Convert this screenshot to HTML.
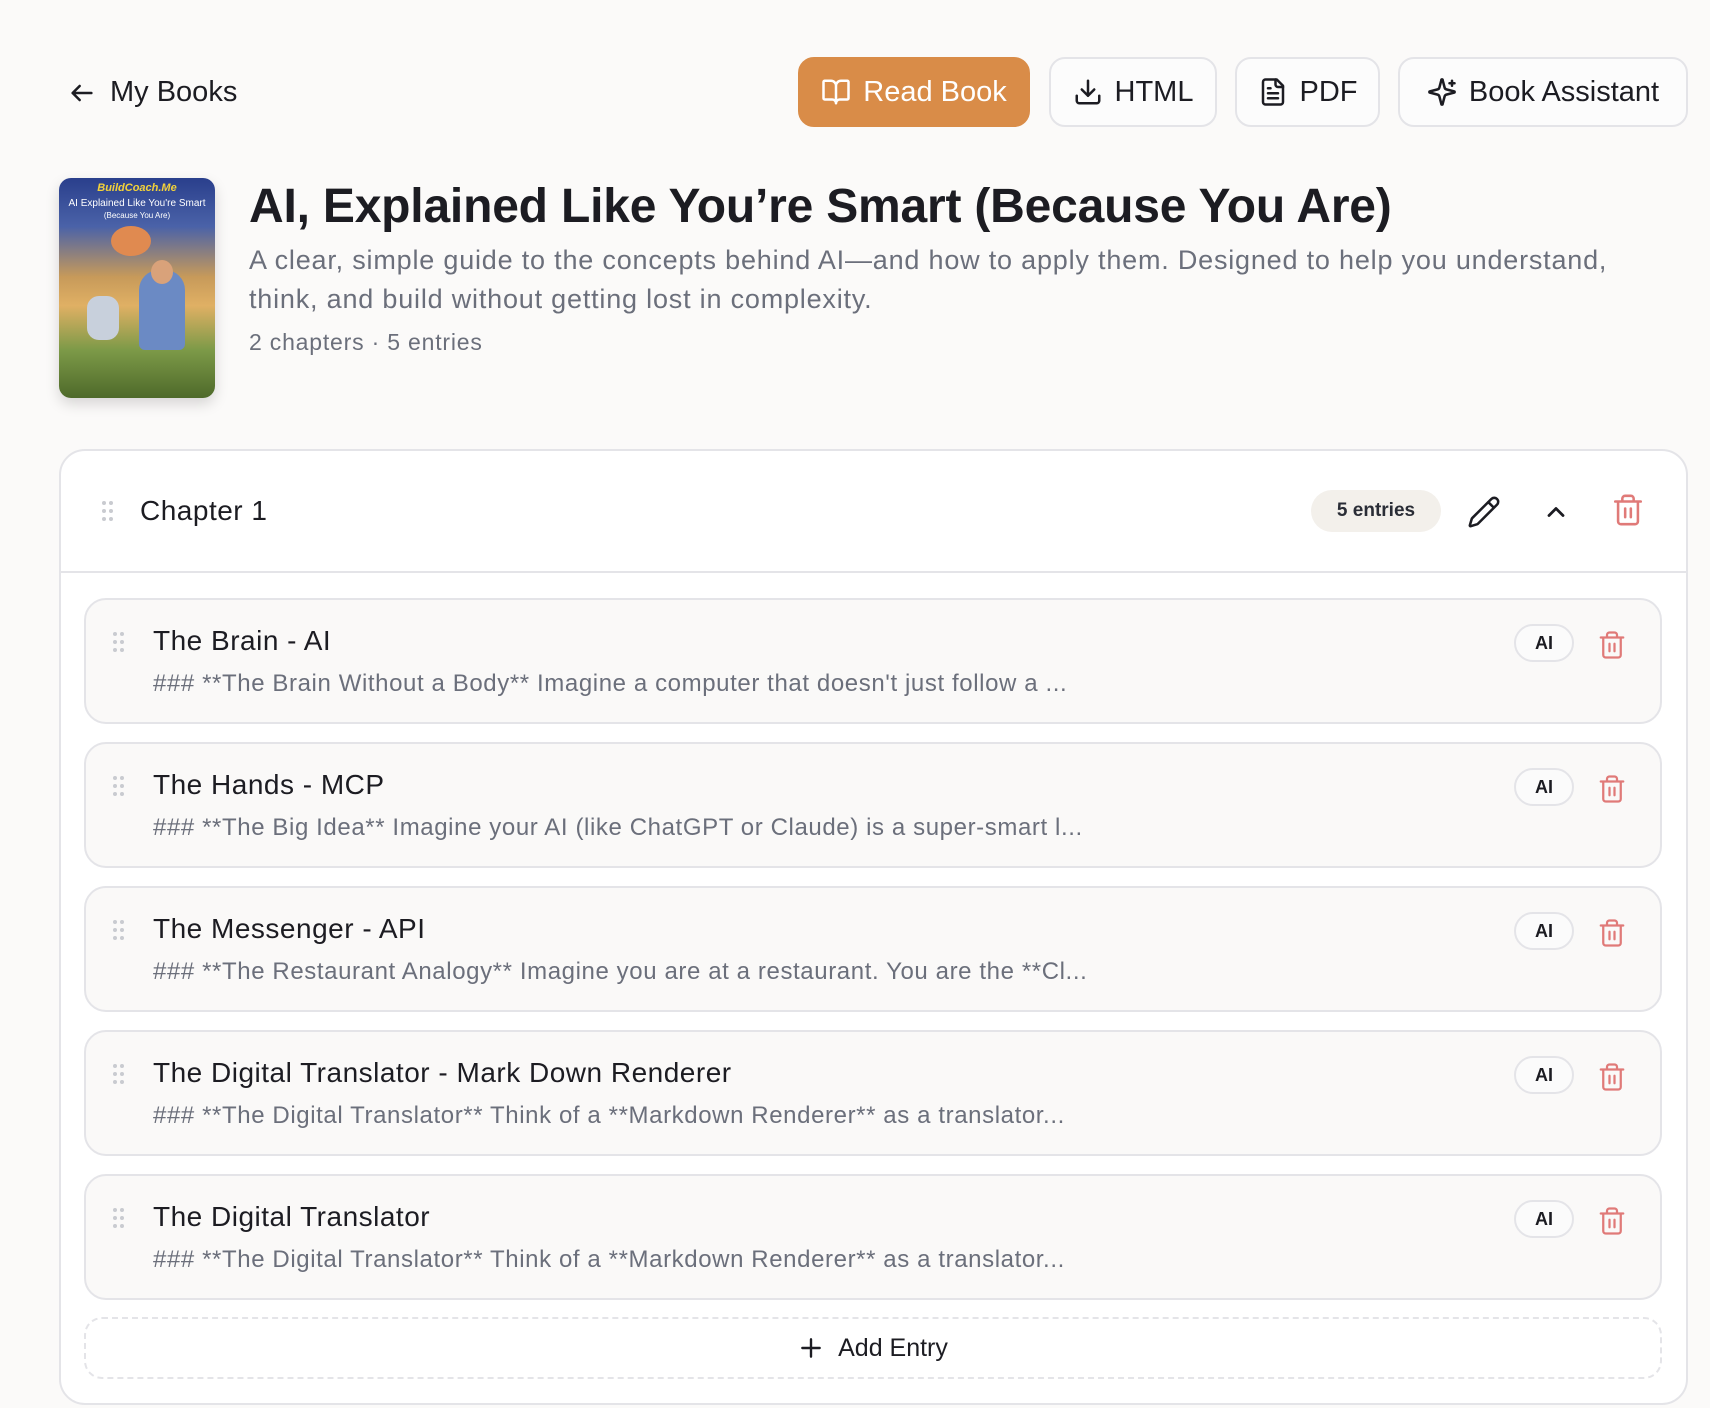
<!DOCTYPE html>
<html><head><meta charset="utf-8">
<style>
*{box-sizing:border-box;margin:0;padding:0}
body{width:1710px;height:1408px;background:#fbfaf9;font-family:"Liberation Sans",sans-serif;color:#1c1c22;position:relative;overflow:hidden}
.abs{position:absolute}
.btn{position:absolute;top:57px;height:70px;border:2px solid #e4e4e8;border-radius:16px;background:#fcfcfc;display:flex;align-items:center;justify-content:center;gap:12px;font-size:29px;color:#1c1c22}
.btn svg{width:30px;height:30px;fill:none;stroke:currentColor;stroke-width:2;stroke-linecap:round;stroke-linejoin:round}
.card{position:absolute;left:59px;top:449px;width:1629px;height:956px;border:2px solid #e4e4e8;border-radius:26px;background:#fff}
.entry{position:absolute;left:84px;width:1578px;height:126px;border:2px solid #e4e4e8;border-radius:22px;background:#faf9f8}
.entry .t{position:absolute;left:67px;top:25px;font-size:28px;color:#1c1c22;letter-spacing:0.5px}
.entry .d{position:absolute;left:67px;top:70px;font-size:24px;color:#6b6f7b;letter-spacing:0.6px}
.entry .ai{position:absolute;left:1428px;top:24px;width:60px;height:38px;border:2px solid #e4e4e8;border-radius:19px;font-size:18px;font-weight:bold;display:flex;align-items:center;justify-content:center;background:#fbfbfb}
.entry .tr{position:absolute;left:1511px;top:30px}
.dots{position:absolute;width:12px;height:20px}
.dots i{position:absolute;width:4px;height:4px;border-radius:2px;background:#c9cbd0}
</style></head><body>

<div class="abs" style="left:68px;top:76px;display:flex;align-items:center;gap:14px;font-size:29px">
<svg width="28" height="28" viewBox="0 0 24 24" fill="none" stroke="#1c1c22" stroke-width="2.2" stroke-linecap="round" stroke-linejoin="round"><path d="M20 12H4M10 6l-6 6 6 6"/></svg>My Books</div>

<div class="btn" style="left:798px;width:232px;background:#d98c48;border-color:#d98c48;color:#fff">
<svg viewBox="0 0 24 24"><path d="M12 7v14M3 18a1 1 0 0 1-1-1V4a1 1 0 0 1 1-1h5a4 4 0 0 1 4 4 4 4 0 0 1 4-4h5a1 1 0 0 1 1 1v13a1 1 0 0 1-1 1h-6a3 3 0 0 0-3 3 3 3 0 0 0-3-3z"/></svg>Read Book</div>
<div class="btn" style="left:1049px;width:168px">
<svg viewBox="0 0 24 24"><path d="M12 15V3M21 15v4a2 2 0 0 1-2 2H5a2 2 0 0 1-2-2v-4M7 10l5 5 5-5"/></svg>HTML</div>
<div class="btn" style="left:1235px;width:145px">
<svg viewBox="0 0 24 24"><path d="M15 2H6a2 2 0 0 0-2 2v16a2 2 0 0 0 2 2h12a2 2 0 0 0 2-2V7z"/><path d="M14 2v4a2 2 0 0 0 2 2h4M10 9H8M16 13H8M16 17H8"/></svg>PDF</div>
<div class="btn" style="left:1398px;width:290px">
<svg viewBox="0 0 24 24"><path d="M9.9 15.5a2 2 0 0 0-1.4-1.4l-6.1-1.6a.5.5 0 0 1 0-1l6.1-1.6a2 2 0 0 0 1.4-1.4l1.6-6.1a.5.5 0 0 1 1 0l1.6 6.1a2 2 0 0 0 1.4 1.4l6.1 1.6a.5.5 0 0 1 0 1l-6.1 1.6a2 2 0 0 0-1.4 1.4l-1.6 6.1a.5.5 0 0 1-1 0zM20 3v4M22 5h-4"/></svg>Book Assistant</div>

<div class="abs" style="left:59px;top:178px;width:156px;height:220px;border-radius:12px;overflow:hidden;box-shadow:0 6px 14px rgba(0,0,0,.15);background:linear-gradient(180deg,#2a3f8c 0%,#4a62a8 22%,#c79a5a 45%,#e0b064 58%,#7d9a48 78%,#4e6a2a 100%)">
<div style="position:absolute;top:4px;width:100%;text-align:center;color:#f3d23a;font-size:11px;font-style:italic;font-weight:bold">BuildCoach.Me</div>
<div style="position:absolute;top:20px;width:100%;text-align:center;color:#fff;font-size:10px">AI Explained Like You're Smart</div>
<div style="position:absolute;top:33px;width:100%;text-align:center;color:#fff;font-size:8px">(Because You Are)</div>
<div style="position:absolute;left:52px;top:48px;width:40px;height:30px;border-radius:50%;background:#e08a50"></div>
<div style="position:absolute;left:80px;top:92px;width:46px;height:80px;border-radius:20px 20px 6px 6px;background:#6b8ac4"></div>
<div style="position:absolute;left:92px;top:82px;width:22px;height:24px;border-radius:50%;background:#d9a27a"></div>
<div style="position:absolute;left:28px;top:118px;width:32px;height:44px;border-radius:12px;background:#c8d0dc"></div>
</div>

<div class="abs" style="left:249px;top:179px;font-size:48px;font-weight:bold;letter-spacing:-0.2px">AI, Explained Like You’re Smart (Because You Are)</div>
<div class="abs" style="left:249px;top:241px;width:1400px;font-size:27px;line-height:39px;color:#6b6f7b;letter-spacing:0.8px">A clear, simple guide to the concepts behind AI—and how to apply them. Designed to help you understand, think, and build without getting lost in complexity.</div>
<div class="abs" style="left:249px;top:329px;font-size:23px;color:#6b6f7b;letter-spacing:0.8px">2 chapters · 5 entries</div>

<div class="card">
<div style="position:absolute;left:0;right:0;top:120px;border-top:2px solid #e4e4e8"></div>
<div class="dots" style="left:41px;top:50px"><i style="left:0;top:0"></i><i style="left:7px;top:0"></i><i style="left:0;top:8px"></i><i style="left:7px;top:8px"></i><i style="left:0;top:16px"></i><i style="left:7px;top:16px"></i></div>
<div style="position:absolute;left:79px;top:44px;font-size:28px;letter-spacing:0.5px">Chapter 1</div>
<div style="position:absolute;left:1250px;top:39px;width:130px;height:42px;border-radius:21px;background:#f3f0eb;font-size:19px;font-weight:bold;color:#2a2d36;display:flex;align-items:center;justify-content:center">5 entries</div>
<svg style="position:absolute;left:1406px;top:44px" width="34" height="34" viewBox="0 0 24 24" fill="none" stroke="#1c1c22" stroke-width="1.8" stroke-linecap="round" stroke-linejoin="round"><path d="M21.2 6.8a2.8 2.8 0 0 0-4-4L3.8 16.2a2 2 0 0 0-.5.8l-1.3 4.4a.5.5 0 0 0 .6.6l4.4-1.3a2 2 0 0 0 .8-.5zM15 5l4 4"/></svg>
<svg style="position:absolute;left:1481px;top:47px" width="28" height="28" viewBox="0 0 24 24" fill="none" stroke="#1c1c22" stroke-width="2.4" stroke-linecap="round" stroke-linejoin="round"><path d="M6 15l6-6 6 6"/></svg>
<svg style="position:absolute;left:1550px;top:42px" width="34" height="34" viewBox="0 0 24 24" fill="none" stroke="#e07a78" stroke-width="1.8" stroke-linecap="round" stroke-linejoin="round"><path d="M3 6h18M19 6v14a2 2 0 0 1-2 2H7a2 2 0 0 1-2-2V6M8 6V4a2 2 0 0 1 2-2h4a2 2 0 0 1 2 2v2M10 11v6M14 11v6"/></svg>
</div>

<div class="entry" style="top:598px"><div class="dots" style="left:27px;top:32px"><i style="left:0;top:0"></i><i style="left:7px;top:0"></i><i style="left:0;top:8px"></i><i style="left:7px;top:8px"></i><i style="left:0;top:16px"></i><i style="left:7px;top:16px"></i></div><div class="t">The Brain - AI</div><div class="d">### **The Brain Without a Body** Imagine a computer that doesn't just follow a ...</div><div class="ai">AI</div><svg class="tr" width="30" height="30" viewBox="0 0 24 24" fill="none" stroke="#e07a78" stroke-width="1.8" stroke-linecap="round" stroke-linejoin="round"><path d="M3 6h18M19 6v14a2 2 0 0 1-2 2H7a2 2 0 0 1-2-2V6M8 6V4a2 2 0 0 1 2-2h4a2 2 0 0 1 2 2v2M10 11v6M14 11v6"/></svg></div>

<div class="entry" style="top:742px"><div class="dots" style="left:27px;top:32px"><i style="left:0;top:0"></i><i style="left:7px;top:0"></i><i style="left:0;top:8px"></i><i style="left:7px;top:8px"></i><i style="left:0;top:16px"></i><i style="left:7px;top:16px"></i></div><div class="t">The Hands - MCP</div><div class="d">### **The Big Idea** Imagine your AI (like ChatGPT or Claude) is a super-smart l...</div><div class="ai">AI</div><svg class="tr" width="30" height="30" viewBox="0 0 24 24" fill="none" stroke="#e07a78" stroke-width="1.8" stroke-linecap="round" stroke-linejoin="round"><path d="M3 6h18M19 6v14a2 2 0 0 1-2 2H7a2 2 0 0 1-2-2V6M8 6V4a2 2 0 0 1 2-2h4a2 2 0 0 1 2 2v2M10 11v6M14 11v6"/></svg></div>

<div class="entry" style="top:886px"><div class="dots" style="left:27px;top:32px"><i style="left:0;top:0"></i><i style="left:7px;top:0"></i><i style="left:0;top:8px"></i><i style="left:7px;top:8px"></i><i style="left:0;top:16px"></i><i style="left:7px;top:16px"></i></div><div class="t">The Messenger - API</div><div class="d">### **The Restaurant Analogy** Imagine you are at a restaurant. You are the **Cl...</div><div class="ai">AI</div><svg class="tr" width="30" height="30" viewBox="0 0 24 24" fill="none" stroke="#e07a78" stroke-width="1.8" stroke-linecap="round" stroke-linejoin="round"><path d="M3 6h18M19 6v14a2 2 0 0 1-2 2H7a2 2 0 0 1-2-2V6M8 6V4a2 2 0 0 1 2-2h4a2 2 0 0 1 2 2v2M10 11v6M14 11v6"/></svg></div>

<div class="entry" style="top:1030px"><div class="dots" style="left:27px;top:32px"><i style="left:0;top:0"></i><i style="left:7px;top:0"></i><i style="left:0;top:8px"></i><i style="left:7px;top:8px"></i><i style="left:0;top:16px"></i><i style="left:7px;top:16px"></i></div><div class="t">The Digital Translator - Mark Down Renderer</div><div class="d">### **The Digital Translator** Think of a **Markdown Renderer** as a translator...</div><div class="ai">AI</div><svg class="tr" width="30" height="30" viewBox="0 0 24 24" fill="none" stroke="#e07a78" stroke-width="1.8" stroke-linecap="round" stroke-linejoin="round"><path d="M3 6h18M19 6v14a2 2 0 0 1-2 2H7a2 2 0 0 1-2-2V6M8 6V4a2 2 0 0 1 2-2h4a2 2 0 0 1 2 2v2M10 11v6M14 11v6"/></svg></div>

<div class="entry" style="top:1174px"><div class="dots" style="left:27px;top:32px"><i style="left:0;top:0"></i><i style="left:7px;top:0"></i><i style="left:0;top:8px"></i><i style="left:7px;top:8px"></i><i style="left:0;top:16px"></i><i style="left:7px;top:16px"></i></div><div class="t">The Digital Translator</div><div class="d">### **The Digital Translator** Think of a **Markdown Renderer** as a translator...</div><div class="ai">AI</div><svg class="tr" width="30" height="30" viewBox="0 0 24 24" fill="none" stroke="#e07a78" stroke-width="1.8" stroke-linecap="round" stroke-linejoin="round"><path d="M3 6h18M19 6v14a2 2 0 0 1-2 2H7a2 2 0 0 1-2-2V6M8 6V4a2 2 0 0 1 2-2h4a2 2 0 0 1 2 2v2M10 11v6M14 11v6"/></svg></div>

<div class="abs" style="left:84px;top:1317px;width:1578px;height:62px;border:2px dashed #e4e4e8;border-radius:18px;display:flex;align-items:center;justify-content:center;gap:14px;font-size:25px">
<svg width="26" height="26" viewBox="0 0 24 24" fill="none" stroke="#1c1c22" stroke-width="2.2" stroke-linecap="round"><path d="M12 4v16M4 12h16"/></svg>Add Entry</div>

</body></html>
